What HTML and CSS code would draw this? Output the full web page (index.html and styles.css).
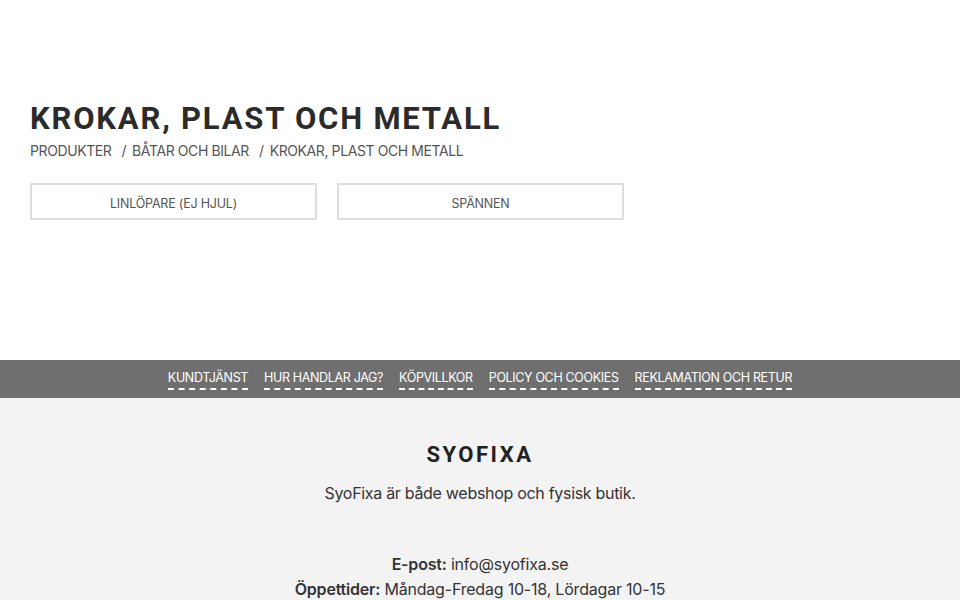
FILE: index.html
```html
<!DOCTYPE html>
<html lang="sv">
<head>
<meta charset="utf-8">
<title>Krokar, plast och metall</title>
<link rel="stylesheet" href="styles.css">
</head>
<body>
<main class="content">
  <h1 class="title">KROKAR, PLAST OCH METALL</h1>
  <nav class="crumbs">
    <a href="#">PRODUKTER</a>
    <span class="sep">/</span>
    <a href="#">BÅTAR OCH BILAR</a>
    <span class="sep">/</span>
    <span>KROKAR, PLAST OCH METALL</span>
  </nav>
  <div class="cats">
    <a class="cat" href="#">LINLÖPARE (EJ HJUL)</a>
    <a class="cat" href="#">SPÄNNEN</a>
  </div>
</main>
<footer>
  <nav class="footlinks">
    <a href="#">KUNDTJÄNST</a>
    <a href="#">HUR HANDLAR JAG?</a>
    <a href="#">KÖPVILLKOR</a>
    <a href="#">POLICY OCH COOKIES</a>
    <a href="#">REKLAMATION OCH RETUR</a>
  </nav>
  <div class="footmain">
    <div class="brand">SYOFIXA</div>
    <p class="lead">SyoFixa är både webshop och fysisk butik.</p>
    <p class="contact"><b>E-post:</b> info@syofixa.se<br><b>Öppettider:</b> Måndag-Fredag 10-18, Lördagar 10-15</p>
  </div>
</footer>
</body>
</html>
```
FILE: styles.css
```css
html, body { margin: 0; padding: 0; }
body {
  font-family: "Inter", "Noto Sans", sans-serif;
  color: #333;
  background: #fff;
}
a { color: inherit; text-decoration: none; }
.content {
  padding: 100px 30px 0;
  height: 360px;
  box-sizing: border-box;
}
.title {
  margin: 0;
  font-family: "Roboto", "Liberation Sans", sans-serif;
  font-weight: 700;
  font-size: 31px;
  letter-spacing: 1.8px;
  line-height: 38px;
  color: #2b2b2b;
}
.crumbs {
  margin-top: 3px;
  display: flex;
  gap: 6px;
  font-size: 14px;
  line-height: 20px;
  color: #555;
  letter-spacing: -0.4px;
}
.crumbs .sep { margin-left: 4px; }
.cats {
  margin-top: 22px;
  display: flex;
  gap: 20px;
}
.cat {
  width: 287px;
  height: 37px;
  box-sizing: border-box;
  border: 2px solid #dedede;
  display: flex;
  align-items: center;
  justify-content: center;
  padding-top: 3px;
  font-size: 12.5px;
  color: #555;
  letter-spacing: -0.2px;
}
footer { background: #f3f3f3; }
.footlinks {
  background: #6f6f6f;
  height: 38px;
  display: flex;
  justify-content: center;
  align-items: flex-start;
  gap: 16px;
  padding-top: 10px;
  box-sizing: border-box;
}
.footlinks a {
  color: #fff;
  font-size: 12.5px;
  line-height: 16px;
  letter-spacing: -0.35px;
  border-bottom: 2px dashed #fff;
  padding-bottom: 2px;
}
.footmain {
  text-align: center;
  padding-top: 43px;
  height: 202px;
  box-sizing: border-box;
}
.brand {
  font-family: "Roboto", "Liberation Sans", sans-serif;
  font-weight: 700;
  font-size: 22px;
  letter-spacing: 2.5px;
  line-height: 28px;
  color: #222;
}
.lead {
  margin: 12px 0 0;
  font-size: 16px;
  line-height: 24px;
  color: #333;
  letter-spacing: -0.3px;
}
.contact {
  margin: 47px 0 0;
  font-size: 16px;
  line-height: 25px;
  color: #333;
  letter-spacing: -0.2px;
}
.contact b { font-weight: 600; }
```
